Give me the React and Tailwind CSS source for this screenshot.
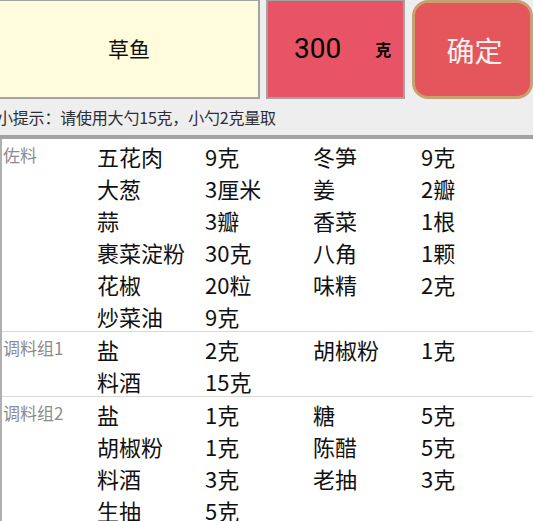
import React from "react";

const font = { fontFamily: '"Noto Sans CJK SC", "Noto Sans", sans-serif' };

const sections = [
  {
    label: "佐料",
    rows: [
      ["五花肉", "9克", "冬笋", "9克"],
      ["大葱", "3厘米", "姜", "2瓣"],
      ["蒜", "3瓣", "香菜", "1根"],
      ["裹菜淀粉", "30克", "八角", "1颗"],
      ["花椒", "20粒", "味精", "2克"],
      ["炒菜油", "9克", "", ""],
    ],
  },
  {
    label: "调料组1",
    rows: [
      ["盐", "2克", "胡椒粉", "1克"],
      ["料酒", "15克", "", ""],
    ],
  },
  {
    label: "调料组2",
    rows: [
      ["盐", "1克", "糖", "5克"],
      ["胡椒粉", "1克", "陈醋", "5克"],
      ["料酒", "3克", "老抽", "3克"],
      ["生抽", "5克", "", ""],
    ],
  },
];

export default function App() {
  return (
    <div
      className="w-[533px] h-[521px] overflow-hidden bg-[#eeeeee] flex flex-col"
      style={font}
    >
      <div className="flex h-[99px] shrink-0 -mt-px">
        <div className="-ml-[2px] w-[262px] h-[100px] border-2 border-[#a3a3a3] bg-[#fffcdd] flex items-center justify-center text-[21px] text-[#111]">
          草鱼
        </div>
        <div className="ml-[6px] w-[139px] h-[100px] border-2 border-[#a3a3a3] bg-[#e85366] flex items-center">
          <span className="ml-[26px] text-[28px] text-black" style={{ fontFamily: "Roboto, sans-serif" }}>300</span>
          <span className="ml-[34px] text-[16px] font-bold text-black">克</span>
        </div>
        <div className="ml-[7px] flex-1 h-[99px] mt-px rounded-[16px] border-[3px] border-[#c9a072] bg-[#e5555c] flex items-center justify-center pl-[4px] text-[28px] text-[#f6f0ee]">
          确定
        </div>
      </div>
      <div className="h-[37px] shrink-0 flex items-center -ml-[3px] text-[16px] text-[#2d2d36] tracking-[-0.2px]">
        小提示：请使用大勺15克，小勺2克量取
      </div>
      <div className="h-[4px] shrink-0 bg-[#a2a2a2]" />
      <div className="flex-1 bg-white border-l-2 border-[#b0b0b0]">
        {sections.map((s, i) => (
          <div
            key={i}
            className={`flex ${i < sections.length - 1 ? "border-b border-[#d9d9d9]" : ""}`}
          >
            <div className="w-[95px] shrink-0 pl-[1px] pt-[5px] text-[17px] text-[#8c8c8c] leading-[22px]">
              {s.label}
            </div>
            <div className="flex-1">
              {s.rows.map((r, j) => (
                <div key={j} className="grid grid-cols-[108px_108px_108px_108px] h-[32px] items-center pt-[1px] text-[22px] text-[#111] leading-none">
                  {r.map((c, k) => (
                    <span key={k}>{c}</span>
                  ))}
                </div>
              ))}
            </div>
          </div>
        ))}
      </div>
    </div>
  );
}
